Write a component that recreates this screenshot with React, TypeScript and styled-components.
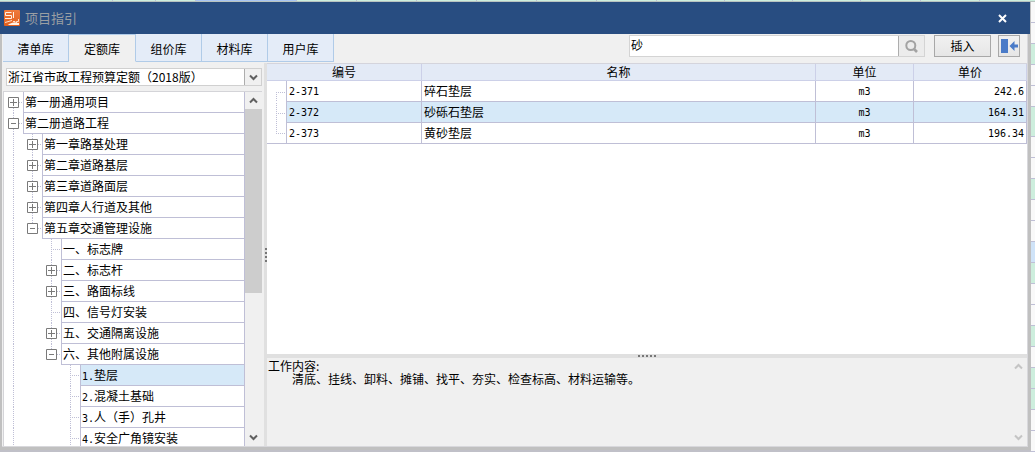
import React, { useState } from "react";
import styled, { createGlobalStyle, css } from "styled-components";

const line = "#bfbfd6";
const headLine = "#ccd0e8";
const panel = "#f0f0f0";
const selected = "#d6e9f8";
const frame = "#c0c0c0";

const GlobalStyle = createGlobalStyle`
  *, *::before, *::after { box-sizing: border-box; }
  body {
    margin: 0;
    background: #c0c0c8;
    color: #000;
    font: 12px/16px "Noto Sans CJK SC", sans-serif;
  }
  button, input, select { font: inherit; color: inherit; margin: 0; padding: 0; border-radius: 0; }
`;

const Page = styled.div`
  display: flex;
  flex-direction: column;
  height: 100vh;
  min-height: 320px;
  overflow: hidden;
`;

const SheetTop = styled.div`
  display: flex;
  flex: none;
  height: 2px;
  background: #cdeedd;
  border-bottom: 1px solid #b9c4c0;
`;

const SheetColumn = styled.span<{ $width: number; $active?: boolean }>`
  width: ${(p) => p.$width}px;
  border-right: 1px solid ${line};
  background: ${(p) => (p.$active ? "#a9c6f3" : "transparent")};
`;

const Middle = styled.div`
  display: flex;
  flex: 1;
  min-height: 0;
`;

const SheetSide = styled.div`
  flex: none;
  width: 4px;
  overflow: hidden;
`;

const tones = { w: "#f9f9f9", g: "#cdeedd", b: "#cfe3f8" };

const SheetRow = styled.div<{ $tone: keyof typeof tones; $tall?: boolean }>`
  height: ${(p) => (p.$tall ? 30 : 21)}px;
  background: ${(p) => tones[p.$tone]};
  border-bottom: 1px solid ${line};
`;

const Window = styled.main`
  display: flex;
  flex-direction: column;
  flex: 1;
  min-width: 0;
  margin-bottom: 2px;
  background: ${frame};
`;

const TitleBar = styled.header`
  display: flex;
  align-items: center;
  flex: none;
  height: 32px;
  margin-right: 1px;
  padding: 0 20px 0 4px;
  background: #284d81;
`;

const Title = styled.h1`
  flex: 1;
  margin: 0 0 0 5px;
  color: #9a9fa3;
  font-size: 13px;
  line-height: 16px;
  font-weight: 400;
`;

const CloseButton = styled.button`
  display: flex;
  align-items: center;
  justify-content: center;
  width: 16px;
  height: 16px;
  border: 0;
  background: none;
`;

const Client = styled.div`
  display: flex;
  flex-direction: column;
  flex: 1;
  min-height: 0;
  margin: 0 3px 3px 2px;
  border-right: 1px solid #d8d8dc;
  border-bottom: 1px solid #d8d8dc;
  background: ${panel};
`;

const ToolBar = styled.div`
  display: flex;
  flex: none;
  height: 29px;
  padding-right: 7px;
`;

const Tabs = styled.div`
  display: flex;
  flex: 1;
  padding-left: 1px;
`;

const Tab = styled.button<{ $active: boolean }>`
  width: 66px;
  height: 28px;
  padding-top: 3px;
  border: 0;
  border-right: 1px solid #b0cbe8;
  border-bottom: 1px solid #b0cbe8;
  background: #e4ecf8;
  ${(p) =>
    p.$active &&
    css`
      width: 67px;
      border-top: 1px solid #b0cbe8;
      border-bottom-color: ${panel};
      background: ${panel};
      padding-top: 2px;
    `}
`;

const SearchBox = styled.form`
  display: flex;
  width: 296px;
  height: 22px;
  margin: 1px 9px 0 0;
  border: 1px solid #d4d4d4;
`;

const SearchInput = styled.input`
  flex: 1;
  min-width: 0;
  padding: 0 1px 2px;
  border: 0;
  background: #fff;
  outline: 0;
`;

const SearchButton = styled.button`
  display: flex;
  align-items: center;
  justify-content: center;
  width: 26px;
  border: 0;
  border-left: 1px solid #adadad;
  background: #ececec;
`;

const ToolButton = styled.button<{ $width: number }>`
  display: flex;
  align-items: center;
  justify-content: center;
  width: ${(p) => p.$width}px;
  height: 22px;
  margin-top: 1px;
  border: 1px solid #a8a8a8;
  background: linear-gradient(#f1f1f1, #e6e6e6);

  & + & { margin-left: 7px; }
`;

const Body = styled.div`
  display: flex;
  flex: 1;
  min-height: 0;
`;

const Side = styled.section`
  display: flex;
  flex-direction: column;
  flex: none;
  width: 262px;
  padding: 5px 2px 0 1px;
`;

const SelectBox = styled.div`
  position: relative;
  display: flex;
  flex: none;
  height: 18px;
  margin: 0 0 5px 3px;
`;

const LibrarySelect = styled.select`
  appearance: none;
  width: 100%;
  padding: 0 18px 0 1px;
  border: 1px solid #d0d0d0;
  background: #fff;
  line-height: 16px;
  outline: 0;
`;

const SelectArrow = styled.span`
  position: absolute;
  top: 1px;
  right: 1px;
  bottom: 1px;
  display: flex;
  align-items: center;
  justify-content: center;
  width: 17px;
  border-left: 1px solid #adadad;
  background: #f0f0f0;
  pointer-events: none;
`;

const TreeBox = styled.div`
  display: flex;
  flex: 1;
  min-height: 0;
  border: 1px solid #d4d4d8;
  border-bottom: 0;
  border-right: 0;
`;

const TreeList = styled.ul`
  flex: 1;
  min-width: 0;
  margin: 0;
  padding: 0;
  overflow: hidden;
  list-style: none;
  background: #fff;
`;

const TreeRow = styled.li`
  display: flex;
  height: 21px;
`;

type Guide = "none" | "full" | "top" | "bottom";

const dots = (dir: string) => `repeating-linear-gradient(${dir}, ${line} 0 1px, transparent 1px 2px)`;

const guideBox: Record<Guide, string> = {
  none: "0 0 / 0 0",
  full: "9px 0 / 1px 100%",
  top: "9px 0 / 1px 11px",
  bottom: "9px 10px / 1px 11px",
};

const Gutter = styled.span<{ $guide: Guide; $branch?: boolean }>`
  display: flex;
  flex: none;
  width: 19px;
  height: 21px;
  padding: 5px 0 0 4px;
  background:
    ${(p) => dots("to bottom")} ${(p) => guideBox[p.$guide]} no-repeat,
    ${(p) => dots("to right")} ${(p) => (p.$branch ? "9px 10px / 10px 1px" : "0 0 / 0 0")} no-repeat;
`;

const Toggle = styled.button`
  display: block;
  width: 11px;
  height: 11px;
  border: 0;
  background: #fff;

  svg { display: block; }
`;

const NodeLabel = styled.span<{ $selected?: boolean }>`
  flex: 1;
  min-width: 0;
  padding: 2px 0 0 1px;
  border: 1px solid ${line};
  border-top: 0;
  background: ${(p) => (p.$selected ? selected : "#fff")};
  white-space: nowrap;
`;

const Num = styled.span`
  font-family: "DejaVu Sans Mono", monospace;
  font-size: 10px;
`;

const ScrollBar = styled.div`
  display: flex;
  flex-direction: column;
  align-items: center;
  flex: none;
  width: 17px;
  background: ${panel};
`;

const ScrollArrow = styled.button`
  display: flex;
  align-items: center;
  justify-content: center;
  flex: none;
  width: 17px;
  height: 17px;
  border: 0;
  background: none;
`;

const Thumb = styled.div`
  flex: none;
  width: 100%;
  height: 52%;
  margin-bottom: auto;
  background: #cdcdcd;
`;

const Splitter = styled.div<{ $vertical?: boolean }>`
  display: flex;
  flex: none;
  flex-direction: ${(p) => (p.$vertical ? "column" : "row")};
  align-items: center;
  justify-content: center;
  gap: 2px;
  ${(p) => (p.$vertical ? "width: 3px;" : "height: 4px;")}
  background: #e0e0e0;
`;

const Grip = styled.i`
  width: 2px;
  height: 2px;
  background: #777;
`;

const Content = styled.section`
  display: flex;
  flex-direction: column;
  flex: 1;
  min-width: 0;
`;

const TableArea = styled.div`
  flex: 1;
  min-height: 0;
  overflow: hidden;
  border-top: 1px solid #d4d4dc;
  background: #fff;
`;

const Table = styled.table`
  width: 100%;
  table-layout: fixed;
  border-spacing: 0;
`;

const Col = styled.col<{ $width?: number }>`
  ${(p) => p.$width && `width: ${p.$width}px;`}
`;

const HeadCell = styled.th`
  height: 17px;
  padding: 0;
  border-right: 1px solid ${headLine};
  border-bottom: 1px solid ${headLine};
  background: #e3eaf6;
  font-weight: 400;
  line-height: 16px;
`;

const GutterCell = styled.td<{ $last?: boolean }>`
  height: 21px;
  padding: 0;
  border-right: 1px solid ${line};
  ${(p) => p.$last && `border-bottom: 1px solid ${line};`}

  span { height: 20px; }
`;

const Cell = styled.td<{ $align?: "left" | "center" | "right"; $selected?: boolean }>`
  height: 21px;
  padding: 0 2px;
  border-right: 1px solid ${line};
  border-bottom: 1px solid ${line};
  background: ${(p) => (p.$selected ? selected : "#fff")};
  line-height: 16px;
  text-align: ${(p) => p.$align ?? "left"};
`;

const Notes = styled.section`
  display: flex;
  flex: none;
  height: 88px;
`;

const NoteText = styled.div`
  flex: 1;
  padding: 1px 0 0 1px;
`;

const NoteTitle = styled.h2`
  margin: 0;
  font-size: 12px;
  line-height: 13px;
  font-weight: 400;
`;

const NoteBody = styled.p`
  margin: 0;
  padding-left: 24px;
  line-height: 13px;
`;

const NoteScroll = styled(ScrollBar)`
  justify-content: space-between;
`;

const Chevron = ({ up, color = "#606060" }: { up?: boolean; color?: string }) => (
  <svg width="9" height="7" viewBox="0 0 9 7" fill="none" stroke={color} strokeWidth="2">
    <path d={up ? "M1 5.5 4.5 2 8 5.5" : "M1 1.5 4.5 5 8 1.5"} />
  </svg>
);

const AppIcon = () => (
  <svg width="16" height="16" viewBox="0 0 16 16">
    <defs>
      <linearGradient id="logo" x1="0" y1="0" x2="0" y2="1">
        <stop offset="0" stopColor="#ef7a3c" />
        <stop offset="1" stopColor="#e25f1c" />
      </linearGradient>
    </defs>
    <rect width="16" height="16" rx="1" fill="url(#logo)" />
    <g fill="none" stroke="#fff1e6">
      <path d="M7.500 2.500H1.500V5.500H7.500V8.500H1M9.500 2v6" />
      <path d="M1 12.500 8 10.500M9 11.500h2v2M14.500 9v2.500h-2v2" strokeOpacity=".85" />
    </g>
    <path d="M5 14 9 12.500 15 13V15H4Z" fill="#fff1e6" />
  </svg>
);

type Node = { text: string; num?: string; guides: Guide[]; box?: "plus" | "minus"; selected?: boolean };

const nodes: Node[] = [
  { text: "第一册通用项目", guides: ["bottom"], box: "plus" },
  { text: "第二册道路工程", guides: ["full"], box: "minus" },
  { text: "第一章路基处理", guides: ["full", "full"], box: "plus" },
  { text: "第二章道路基层", guides: ["full", "full"], box: "plus" },
  { text: "第三章道路面层", guides: ["full", "full"], box: "plus" },
  { text: "第四章人行道及其他", guides: ["full", "full"], box: "plus" },
  { text: "第五章交通管理设施", guides: ["full", "top"], box: "minus" },
  { text: "一、标志牌", guides: ["full", "none", "full"] },
  { text: "二、标志杆", guides: ["full", "none", "full"], box: "plus" },
  { text: "三、路面标线", guides: ["full", "none", "full"], box: "plus" },
  { text: "四、信号灯安装", guides: ["full", "none", "full"] },
  { text: "五、交通隔离设施", guides: ["full", "none", "full"], box: "plus" },
  { text: "六、其他附属设施", guides: ["full", "none", "top"], box: "minus" },
  { text: "垫层", num: "1.", guides: ["full", "none", "none", "full"], selected: true },
  { text: "混凝土基础", num: "2.", guides: ["full", "none", "none", "full"] },
  { text: "人（手）孔井", num: "3.", guides: ["full", "none", "none", "full"] },
  { text: "安全广角镜安装", num: "4.", guides: ["full", "none", "none", "full"] },
];

const items: { code: string; name: string; price: string; guide: Guide }[] = [
  { code: "2-371", name: "碎石垫层", price: "242.6", guide: "bottom" },
  { code: "2-372", name: "砂砾石垫层", price: "164.31", guide: "full" },
  { code: "2-373", name: "黄砂垫层", price: "196.34", guide: "top" },
];

const tabs = ["清单库", "定额库", "组价库", "材料库", "用户库"];
const sheetColumns = [113, 43, 40, 101, 60, 60, 60, 60, 60, 60, 68, 68, 68, 60, 59];
const sheetRows = "wwgwwGwwgwwbgwwgwggwww".split("");

const Grips = ({ count }: { count: number }) => (
  <>
    {Array.from({ length: count }, (_, n) => (
      <Grip key={n} />
    ))}
  </>
);

export default function App() {
  const [tab, setTab] = useState(1);
  const [query, setQuery] = useState("砂");

  return (
    <Page>
      <GlobalStyle />
      <SheetTop>
        {sheetColumns.map((w, i) => (
          <SheetColumn key={i} $width={w} $active={i === 3} />
        ))}
      </SheetTop>
      <Middle>
        <Window>
          <TitleBar>
            <AppIcon />
            <Title>项目指引</Title>
            <CloseButton aria-label="关闭">
              <svg width="9" height="9" viewBox="0 0 9 9" stroke="#fff" strokeWidth="2">
                <path d="M1 1 8 8M8 1 1 8" />
              </svg>
            </CloseButton>
          </TitleBar>
          <Client>
            <ToolBar>
              <Tabs role="tablist">
                {tabs.map((t, i) => (
                  <Tab key={t} role="tab" aria-selected={i === tab} $active={i === tab} onClick={() => setTab(i)}>
                    {t}
                  </Tab>
                ))}
              </Tabs>
              <SearchBox onSubmit={(e) => e.preventDefault()}>
                <SearchInput aria-label="搜索" value={query} onChange={(e) => setQuery(e.target.value)} />
                <SearchButton aria-label="查找">
                  <svg width="13" height="13" viewBox="0 0 13 13" fill="none" stroke="#a3a3a3">
                    <circle cx="5.8" cy="5.5" r="4.5" strokeWidth="2" />
                    <path d="M8.5 8.5 12 12" strokeWidth="2.6" />
                  </svg>
                </SearchButton>
              </SearchBox>
              <ToolButton $width={57}>插入</ToolButton>
              <ToolButton $width={22} aria-label="收起面板">
                <svg width="18" height="14" viewBox="0 0 18 14" fill="#4a7bc8">
                  <path d="M1 0h7v14H1ZM9.500 7l5-5v3.500H18v3h-3.500V12Z" />
                </svg>
              </ToolButton>
            </ToolBar>
            <Body>
              <Side>
                <SelectBox>
                  <LibrarySelect aria-label="定额库">
                    <option>浙江省市政工程预算定额（2018版）</option>
                  </LibrarySelect>
                  <SelectArrow>
                    <Chevron />
                  </SelectArrow>
                </SelectBox>
                <TreeBox>
                  <TreeList>
                    {nodes.map((n) => (
                      <TreeRow key={n.text}>
                        {n.guides.map((g, i) => {
                          const own = i === n.guides.length - 1;
                          return (
                            <Gutter key={i} $guide={g} $branch={own}>
                              {own && n.box && (
                                <Toggle aria-label={n.box === "plus" ? "展开" : "折叠"}>
                                  <svg width="11" height="11" viewBox="0 0 11 11" fill="none" stroke="#7a7a7a">
                                    <path d={n.box === "plus" ? "M.5.5h10v10H.5ZM2 5.500h7M5.500 2v7" : "M.5.5h10v10H.5ZM3 5.500h5"} />
                                  </svg>
                                </Toggle>
                              )}
                            </Gutter>
                          );
                        })}
                        <NodeLabel $selected={n.selected}>
                          {n.num && <Num>{n.num}</Num>}
                          {n.text}
                        </NodeLabel>
                      </TreeRow>
                    ))}
                  </TreeList>
                  <ScrollBar>
                    <ScrollArrow aria-label="向上滚动">
                      <Chevron up />
                    </ScrollArrow>
                    <Thumb />
                    <ScrollArrow aria-label="向下滚动">
                      <Chevron />
                    </ScrollArrow>
                  </ScrollBar>
                </TreeBox>
              </Side>
              <Splitter $vertical>
                <Grips count={4} />
              </Splitter>
              <Content>
                <TableArea>
                  <Table>
                    <colgroup>
                      <Col $width={20} />
                      <Col $width={135} />
                      <Col />
                      <Col $width={98} />
                      <Col $width={113} />
                    </colgroup>
                    <thead>
                      <tr>
                        <HeadCell colSpan={2}>编号</HeadCell>
                        <HeadCell>名称</HeadCell>
                        <HeadCell>单位</HeadCell>
                        <HeadCell>单价</HeadCell>
                      </tr>
                    </thead>
                    <tbody>
                      {items.map((r, i) => (
                        <tr key={r.code}>
                          <GutterCell $last={i === items.length - 1}>
                            <Gutter $guide={r.guide} $branch />
                          </GutterCell>
                          <Cell $selected={i === 1}>
                            <Num>{r.code}</Num>
                          </Cell>
                          <Cell $selected={i === 1}>{r.name}</Cell>
                          <Cell $selected={i === 1} $align="center">
                            <Num>m3</Num>
                          </Cell>
                          <Cell $selected={i === 1} $align="right">
                            <Num>{r.price}</Num>
                          </Cell>
                        </tr>
                      ))}
                    </tbody>
                  </Table>
                </TableArea>
                <Splitter>
                  <Grips count={5} />
                </Splitter>
                <Notes>
                  <NoteText>
                    <NoteTitle>工作内容:</NoteTitle>
                    <NoteBody>清底、挂线、卸料、摊铺、找平、夯实、检查标高、材料运输等。</NoteBody>
                  </NoteText>
                  <NoteScroll>
                    <ScrollArrow aria-label="向上滚动">
                      <Chevron up color="#c4c4c4" />
                    </ScrollArrow>
                    <ScrollArrow aria-label="向下滚动">
                      <Chevron color="#c4c4c4" />
                    </ScrollArrow>
                  </NoteScroll>
                </Notes>
              </Content>
            </Body>
          </Client>
        </Window>
        <SheetSide>
          {sheetRows.map((t, i) => (
            <SheetRow key={i} $tone={t.toLowerCase() as keyof typeof tones} $tall={t === "G"} />
          ))}
        </SheetSide>
      </Middle>
    </Page>
  );
}
